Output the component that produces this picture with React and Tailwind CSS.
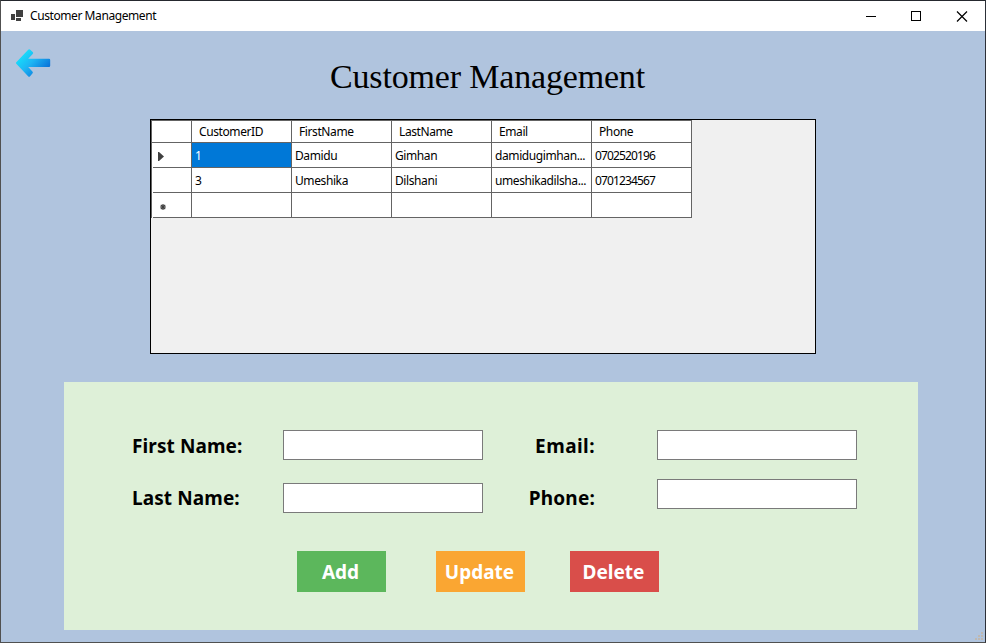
const columns = ['CustomerID', 'FirstName', 'LastName', 'Email', 'Phone'];
const customers = [
  ['1', 'Damidu', 'Gimhan', 'damidugimhan...', '0702520196'],
  ['3', 'Umeshika', 'Dilshani', 'umeshikadilsha...', '0701234567'],
  ['', '', '', '', ''],
];

function TitleBar() {
  return (
    <header className="flex h-[30px] shrink-0 items-center bg-white">
      <svg className="ml-[10px] h-3 w-3" viewBox="0 0 12 12" fill="#404040" shapeRendering="crispEdges">
        <path d="M0 4h4v6H0zM5 0h7v7H5zM5 8h5v3H5z" />
      </svg>
      <span className="ml-[7px] text-[12px] leading-[30px] tracking-[-0.42px]">Customer Management</span>
      <svg className="ml-auto mr-[17px] h-[11px] w-[103px]" viewBox="0 0 103 11" fill="none" stroke="#000">
        <path d="M1 5.5h10M46.5.5h9v9h-9z" shapeRendering="crispEdges" />
        <path d="M92 .5l10 10M102 .5l-10 10" strokeWidth="1.2" />
      </svg>
    </header>
  );
}

function BackArrow() {
  return (
    <svg className="ml-[14px] mt-[17px] h-[30px] w-[36px] shrink-0" viewBox="0 0 36 30">
      <defs>
        <linearGradient id="arrow" x1="6" y1="4" x2="29" y2="27" gradientUnits="userSpaceOnUse">
          <stop stopColor="#16e4fc" />
          <stop offset=".45" stopColor="#1db6f4" />
          <stop offset="1" stopColor="#0869d5" />
        </linearGradient>
      </defs>
      <path
        d="M1.3 14.2 13.2 1.7q1-1 2 0l2.5 2.3q1 1 0 2L13.2 10.8H34q1.2 0 1.2 1.2v5.8q0 1.2-1.2 1.2H13.2l4.2 4.6q1 1 0 2l-2.3 2.6q-1 1-2 0L1.3 15.8q-.8-.8 0-1.6z"
        fill="url(#arrow)"
      />
    </svg>
  );
}

function CustomerGrid() {
  return (
    <section className="ml-[149px] h-[235px] w-[666px] border border-black bg-[#f0f0f0] text-[12px] tracking-[-0.4px]">
      <div className="w-[541px] border-l border-t border-[#646464] bg-white">
        <div className="flex h-[22px] border-b border-[#646464]">
          <div className="w-[40px] border-r border-[#646464]" />
          {columns.map((name) => (
            <div key={name} className="w-[100px] border-r border-[#646464] pl-[7px] leading-[22px]">{name}</div>
          ))}
        </div>
        {customers.map((row, r) => (
          <div key={r} className="flex h-[25px] pl-px">
            <div className="flex w-[39px] items-center border-b border-r border-[#646464]">
              {r === 0 && (
                <svg className="ml-[5px] mt-[3px] h-[9px] w-[6px]" viewBox="0 0 6 9" fill="#404040"><path d="M0 0h1l5 4.5L1 9H0z" /></svg>
              )}
              {r === 2 && (
                <svg className="ml-[7px] mt-[3px] h-[6px] w-[6px]" viewBox="0 0 6 6" stroke="#404040" strokeWidth="1.2">
                  <path d="M3 0v6M0 3h6M.8.8l4.4 4.4M5.2.8.8 5.2" />
                </svg>
              )}
            </div>
            {row.map((value, c) => (
              <div
                key={c}
                className={`w-[100px] whitespace-nowrap border-b border-r border-[#646464] pl-[3px] leading-[25px] ${r === 0 && c === 0 ? 'bg-[#0078d7] text-white' : ''} ${c === 4 ? 'tracking-[-0.87px]' : ''}`}
              >
                {value}
              </div>
            ))}
          </div>
        ))}
      </div>
    </section>
  );
}

const inputStyle = 'block h-[30px] w-[200px] border border-[#7a7a7a] bg-white';
const buttonStyle = "h-[41px] w-[89px] pr-[2px] text-center font-['Noto_Sans'] text-[19px] font-bold leading-[43px] text-white";

function CustomerForm() {
  return (
    <section className="ml-[63px] mt-[28px] h-[248px] w-[854px] bg-[#def0d8] pt-[48px]">
      <div className="flex font-['Noto_Sans'] text-[19px] font-bold leading-[32px] tracking-[0.1px]">
        <div className="ml-[68px] flex w-[151px] flex-col gap-[20px]">
          <label htmlFor="first">First Name:</label>
          <label htmlFor="last">Last Name:</label>
        </div>
        <div className="flex w-[200px] flex-col gap-[23px]">
          <input id="first" className={inputStyle} />
          <input id="last" className={inputStyle} />
        </div>
        <div className="flex w-[112px] flex-col gap-[20px] text-right">
          <label htmlFor="email" className="tracking-[0.45px]">Email:</label>
          <label htmlFor="phone" className="tracking-[0.2px]">Phone:</label>
        </div>
        <div className="ml-[62px] flex w-[200px] flex-col gap-[19px]">
          <input id="email" className={inputStyle} />
          <input id="phone" className={inputStyle} />
        </div>
      </div>
      <div className="ml-[233px] mt-[37px] flex">
        <button className={`${buttonStyle} bg-[#5cb75c]`}>Add</button>
        <button className={`${buttonStyle} ml-[50px] bg-[#faa632]`}>Update</button>
        <button className={`${buttonStyle} ml-[45px] bg-[#d94e4a]`}>Delete</button>
      </div>
    </section>
  );
}

export default function App() {
  return (
    <div className="flex h-[643px] w-[986px] flex-col overflow-hidden border border-b-[#505050] border-l-[#505050] border-r-[#2c3038] border-t-[#25282e] bg-[#b0c4de] font-['Noto_Sans',sans-serif] text-black">
      <TitleBar />
      <main className="flex flex-1 flex-col">
        <div className="flex h-[88px]">
          <BackArrow />
          <h1 className="ml-[279px] mt-[26px] whitespace-nowrap font-['Liberation_Serif',serif] text-[34px] leading-[40px] tracking-[-0.17px]">Customer Management</h1>
        </div>
        <CustomerGrid />
        <CustomerForm />
        <svg className="ml-auto mt-auto h-[12px] w-[12px] shrink-0" viewBox="0 0 12 12" fill="#bfb8b0" shapeRendering="crispEdges">
          <path d="M8 2h2v2H8zM5 5h2v2H5zM8 5h2v2H8zM2 8h2v2H2zM5 8h2v2H5zM8 8h2v2H8z" />
        </svg>
      </main>
    </div>
  );
}
